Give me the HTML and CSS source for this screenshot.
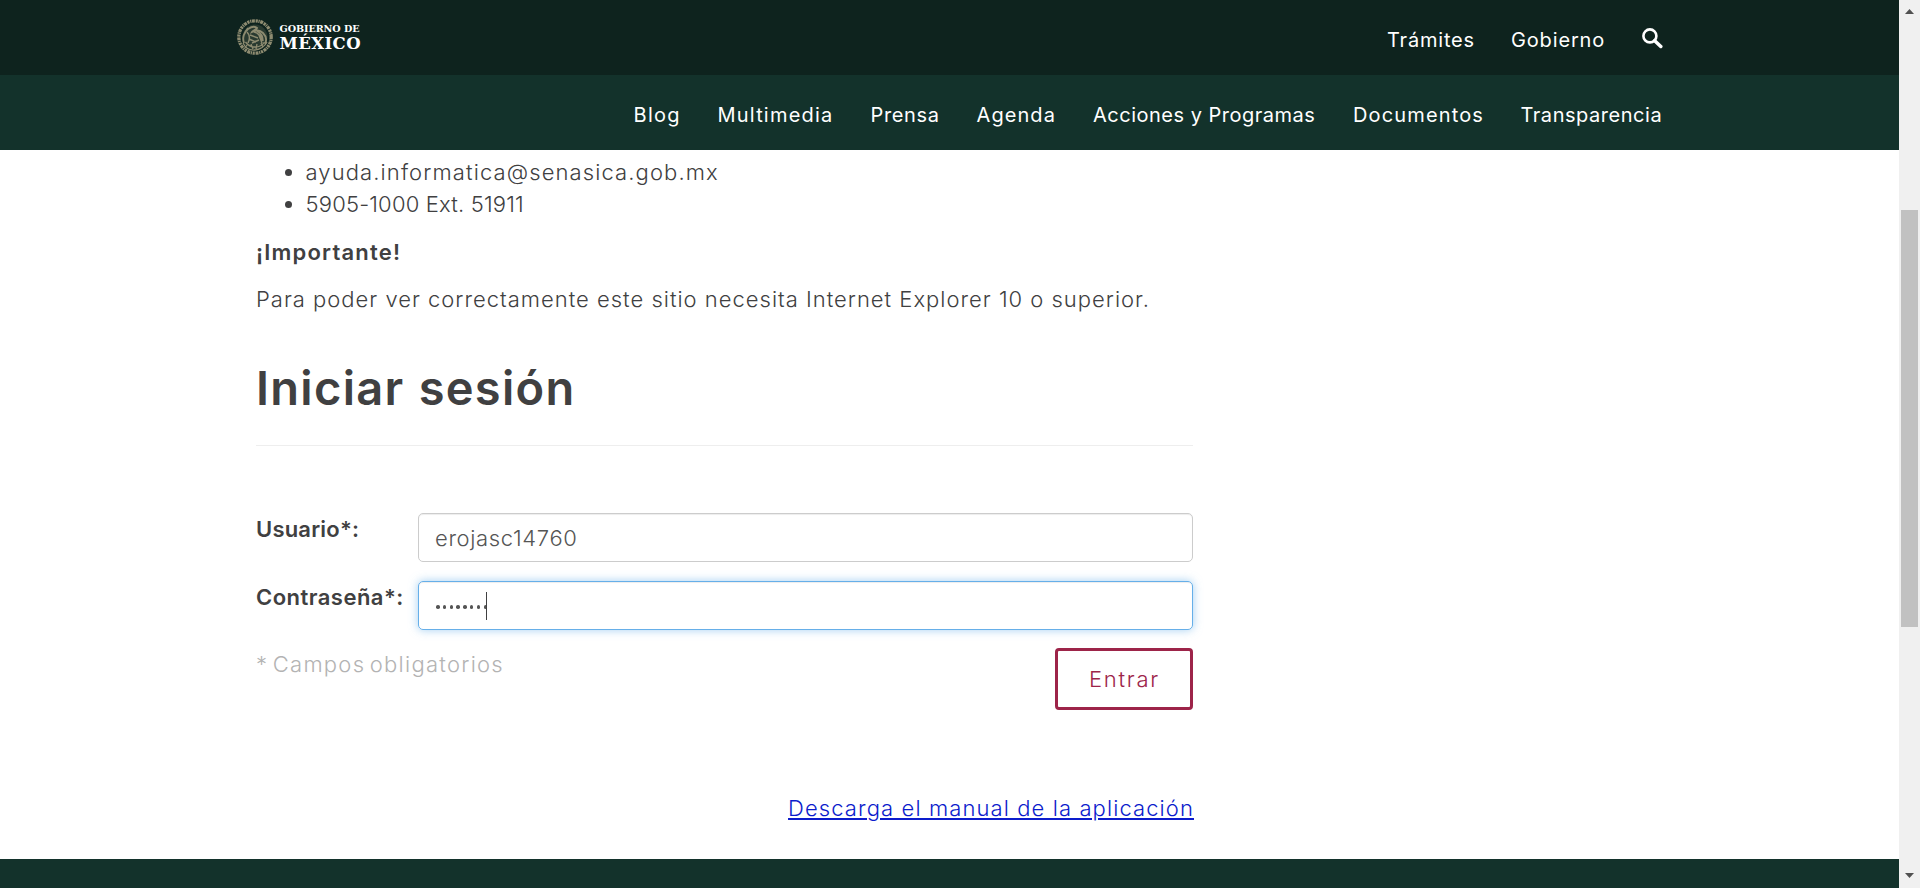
FILE: index.html
```
<!DOCTYPE html>
<html lang="es">
<head>
<meta charset="utf-8">
<title>Iniciar sesión</title>
<link rel="stylesheet" href="styles.css">
</head>
<body>
<div class="window">
  <div class="page">
    <header class="topbar">
      <div class="container topbar-row">
        <svg class="logo" width="126" height="40" viewBox="236 17 126 40" role="img">
          <g fill="none" stroke="#8d8b70">
            <circle cx="255" cy="37" r="12.500" fill="#8d8b70" fill-opacity=".22" stroke="none" />
            <circle cx="255" cy="37" r="16.200" stroke-width="3.300" stroke-dasharray="2.2 .7 1.2 .6 3 .8" />
            <path d="M244 43c-2-5 0-11 4-14 3-2 7-3 9-1-1 2-4 2-5 4 4-2 8-2 11 1 3 3 4 7 2 11" stroke-width="1.9" />
            <path d="M247 32c3 3 3 7 1 11M250 35l8 3M249 39l7 3M254 32c4 1 7 4 8 9M257 31c4 2 6 6 6 10M252 43l7-3M259 35l3 8M248 28l-2 3" stroke-width="1.5" />
            <path d="M243 43c3 6 8 7.500 12 7s9-2 12-8M245.500 42c3 4 6 5 9.500 5s7-1 9.500-5M251 44l2 5M257 44l-1 5M261 43l2 4M247 45l-2 3" stroke-width="1.3" />
          </g>
          <g fill="#fff" class="logo-text">
            <text x="279.500" y="32" font-size="9.600" textLength="80">GOBIERNO DE</text>
            <text x="279.500" y="49" font-size="16.500" textLength="81">MÉXICO</text>
          </g>
        </svg>
        <nav class="top-links">
          <a class="ls-tramites">Trámites</a>
          <a class="ls-gobierno">Gobierno</a>
          <svg class="search" width="21" height="21" viewBox="0 0 21 21">
            <circle cx="7.900" cy="7.900" r="6.500" fill="none" stroke="#fff" stroke-width="2.600" />
            <path d="M12.700 12.700L18.800 18.500" stroke="#fff" stroke-width="3.500" stroke-linecap="round" />
          </svg>
        </nav>
      </div>
    </header>
    <div class="subbar">
      <nav class="container sub-links">
        <a class="ls-blog">Blog</a>
        <a class="ls-multimedia">Multimedia</a>
        <a class="ls-prensa">Prensa</a>
        <a class="ls-agenda">Agenda</a>
        <a class="ls-acciones">Acciones y Programas</a>
        <a class="ls-documentos">Documentos</a>
        <a class="ls-transparencia">Transparencia</a>
      </nav>
    </div>
    <main class="content">
      <ul class="contact">
        <li><span class="ls-mail">ayuda.informatica@senasica.gob.mx</span></li>
        <li><span class="ls-phone">5905-1000 Ext. 51911</span></li>
      </ul>
      <p class="strong ls-importante">¡Importante!</p>
      <p class="note">Para poder ver correctamente este sitio necesita Internet Explorer 10 o superior.</p>
      <h1 class="title">Iniciar sesión</h1>
      <form class="form">
        <div class="row">
          <label class="label ls-usuario">Usuario*:</label>
          <div class="field"><span class="value">erojasc14760</span></div>
        </div>
        <div class="row password">
          <label class="label ls-contrasena">Contraseña*:</label>
          <div class="field focused">
            <span class="dots"><i></i><i></i><i></i><i></i><i></i><i></i><i></i><i></i></span><span class="caret"></span>
          </div>
        </div>
        <div class="row actions">
          <span class="required">* Campos obligatorios</span>
          <button class="submit" type="button">Entrar</button>
        </div>
      </form>
      <p class="manual"><a class="manual-link">Descarga el manual de la aplicación</a></p>
    </main>
    <footer class="footer"></footer>
  </div>
  <aside class="scrollbar">
    <svg width="9" height="5" viewBox="0 0 9 5"><path d="M0 5L4.500 0L9 5z" fill="#505050" /></svg>
    <div class="thumb"></div>
    <svg width="9" height="5" viewBox="0 0 9 5"><path d="M0 0L4.500 5L9 0z" fill="#505050" /></svg>
  </aside>
</div>
</body>
</html>
```
FILE: styles.css
```
* { box-sizing: border-box; }
body {
  margin: 0;
  background: #fff;
  color: #404041;
  font: 300 22px/32px Inter, "Liberation Sans", sans-serif;
  overflow: hidden;
}
p, h1, ul { margin: 0; padding: 0; }
.window { display: flex; height: 888px; }
.page { flex: 1; display: flex; flex-direction: column; }
.container { width: 1425px; margin-left: 237px; }

.topbar { height: 75px; background: #0e231e; color: #fff; }
.topbar-row { display: flex; justify-content: space-between; }
.logo { display: block; margin: 17px 0 0 -1px; }
.logo-text { font-family: "DejaVu Serif", serif; font-weight: 700; }
.top-links, .sub-links {
  display: grid;
  font-size: 20px;
  font-weight: 400;
  line-height: 28px;
  padding-top: 26px;
  white-space: nowrap;
}
.top-links { grid-template-columns: 124px 130.500px 20.500px; }
.search { display: block; margin-top: 1.500px; }
.subbar { height: 75px; background: #13322b; color: #fff; }
.sub-links {
  justify-content: end;
  grid-template-columns: 84px 153px 106px 116.500px 260px 167.500px 141.500px;
}

.content { width: 938px; margin-left: 256px; padding-top: 6px; flex: 1; white-space: nowrap; }
.contact { list-style: none; padding-left: 29px; margin-bottom: 16px; }
.contact li { display: flex; align-items: center; gap: 13.500px; }
.contact li::before { content: ""; width: 7px; height: 7px; border-radius: 50%; background: #404041; }
.strong { font-weight: 600; margin-bottom: 15px; }
.note { letter-spacing: .995px; }
.title {
  width: 937px;
  margin: 47px 0 67px;
  padding-bottom: 31px;
  border-bottom: 1px solid #eee;
  font-size: 47px;
  font-weight: 600;
  line-height: 52px;
  letter-spacing: 1.300px;
  word-spacing: 1px;
}
.form { width: 937px; }
.row { display: flex; margin-bottom: 19px; }
.password { margin-bottom: 18px; }
.label { width: 162px; font-weight: 600; }
.field {
  flex: 1;
  display: flex;
  height: 49px;
  padding: 8px 16px;
  border: 1px solid #ccc;
  border-radius: 5px;
  box-shadow: inset 0 1px 1px rgba(0, 0, 0, .075);
  color: #555;
}
.value { letter-spacing: .650px; }
.field.focused {
  border-color: #66afe9;
  box-shadow: inset 0 1px 1px rgba(0, 0, 0, .075), 0 0 10px rgba(102, 175, 233, .6);
  align-items: center;
}
.dots { display: flex; gap: 3.300px; padding: 3px 0 0 1px; }
.dots i { width: 3.500px; height: 3.500px; border-radius: 50%; background: #555; }
.caret { width: 1px; height: 28px; margin-left: -1px; background: #404041; }
.actions { justify-content: space-between; margin-bottom: 0; }
.required { color: #b3b3b3; letter-spacing: 1.270px; word-spacing: -3px; }
.submit {
  width: 138px;
  height: 62px;
  padding: 12px 0 12px 31px;
  border: 3px solid #9d2449;
  border-radius: 4px;
  background: #fff;
  color: #9d2449;
  font: inherit;
  line-height: 32px;
  text-align: left;
  letter-spacing: 1.750px;
}
.manual { width: 938px; margin-top: 82px; text-align: right; }
.manual-link {
  color: #0c1ccc;
  letter-spacing: 1.100px;
  text-decoration: underline;
  text-decoration-thickness: 2px;
  text-underline-offset: 2px;
}
.footer { height: 29px; background: #13322b; }

.ls-tramites { letter-spacing: .800px; }
.ls-gobierno { letter-spacing: .850px; }
.ls-blog { letter-spacing: 1.300px; }
.ls-multimedia { letter-spacing: 1.200px; }
.ls-prensa { letter-spacing: .650px; }
.ls-agenda { letter-spacing: 1.080px; }
.ls-acciones { letter-spacing: .500px; }
.ls-documentos { letter-spacing: 1.150px; }
.ls-transparencia { letter-spacing: .530px; }
.ls-mail { letter-spacing: 1.110px; }
.ls-phone { letter-spacing: .180px; }
.ls-importante { letter-spacing: 1.200px; }
.ls-usuario { letter-spacing: .200px; }
.ls-contrasena { letter-spacing: .480px; }

.scrollbar {
  width: 21px;
  padding: 9px 0 10px;
  background: #f0f0f0;
  display: flex;
  flex-direction: column;
  align-items: center;
}
.thumb { width: 17px; height: 417px; margin: 196px 0 auto; background: #c1c1c1; }
```
